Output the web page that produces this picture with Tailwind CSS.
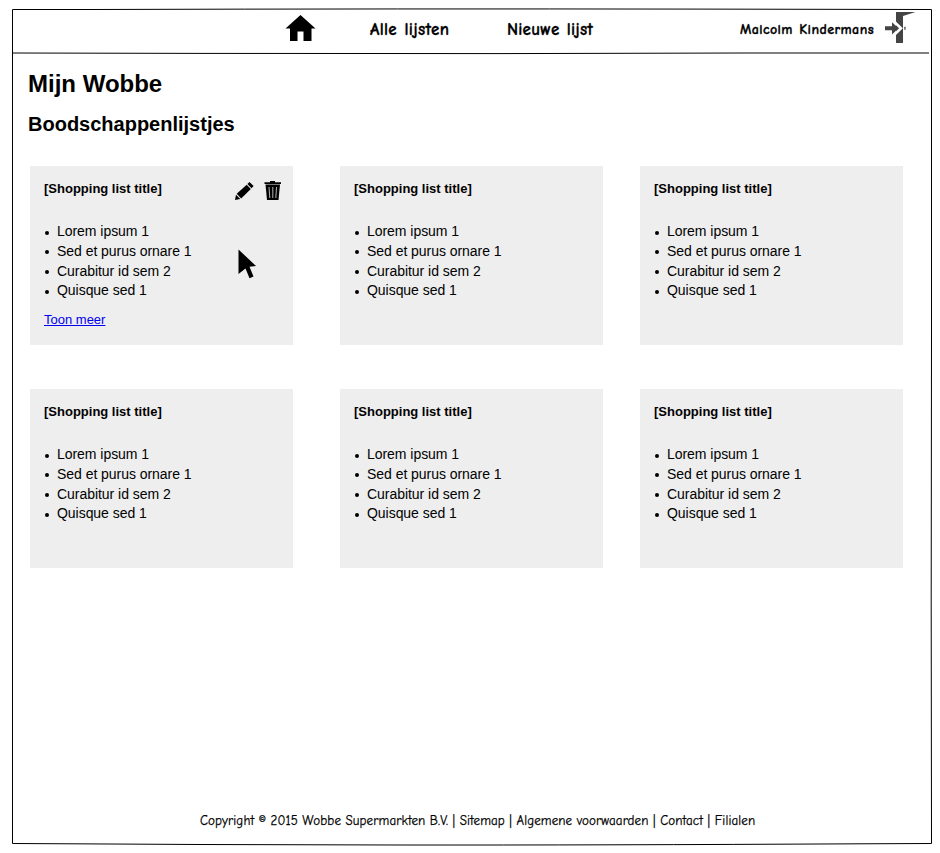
<!DOCTYPE html>
<html lang="nl">
<head>
<meta charset="utf-8">
<title>Mijn Wobbe</title>
<script src="https://cdn.jsdelivr.net/npm/@tailwindcss/browser@4"></script>
</head>
<body class="bg-white text-black font-['Liberation_Sans',Arial,sans-serif]">
<div class="relative w-[940px] h-[853px] overflow-hidden flex flex-col pt-[9px] px-[12px]">
  <!-- hand-drawn page frame -->
  <svg class="absolute inset-0 pointer-events-none" width="940" height="853" fill="none" stroke="#000" stroke-width="1">
    <path d="M12.5 9.5L90 9.5Q400 8.6 700 9.1L931.5 9.5L931.5 330L931.2 600L931.5 843.5L860 843.8Q600 845.2 400 845L200 844.5L110 844L12.5 843.5L12.5 9.5"/>
    <path d="M12.5 53L200 53.4L500 53.6L740 53L929 53"/>
  </svg>

  <header class="h-[44px] shrink-0 flex items-start font-['Comic_Sans_MS','Comic_Neue',Lato,sans-serif] font-bold text-[17px] leading-[22px] whitespace-nowrap">
    <svg class="ml-[273px] mt-[5px] shrink-0" width="31" height="28" viewBox="0 0 31 28"><path d="M15.5 1L30.5 14.5H26.5V27H18.5V17.5H12.5V27H5V14.5H.5Z"/></svg>
    <nav class="flex pt-[10px] [-webkit-text-stroke:0.3px_#000]">
      <a class="block ml-[54px] w-[137px] tracking-[0.32px] [word-spacing:1px]">Alle lijsten</a>
      <a class="block w-[233px] tracking-[0.2px] [word-spacing:1px]">Nieuwe lijst</a>
    </nav>
    <span class="block w-[144px] pt-[10px] text-[14px] tracking-[0.42px] [word-spacing:1px] [-webkit-text-stroke:0.3px_#000]">Malcolm Kindermans</span>
    <svg class="mt-[2px] shrink-0" width="33" height="33" viewBox="0 0 33 33">
      <path fill="#444" d="M12 1H31.5L19 5V32H12Z"/>
      <path d="M10.8 11.3L17 17.3L10.8 23.3" fill="none" stroke="#fff" stroke-width="2.6"/>
      <path fill="#444" d="M1 15.3H8V11.2L14.5 17.3L8 23.4V19.2H1Z"/>
      <path fill="#444" d="M20.3 15.7H21.6V18.7H20.3Z"/>
    </svg>
  </header>

  <main class="pl-[16px] pt-[17px]">
    <h1 class="font-bold text-[24px] leading-[28px]">Mijn Wobbe</h1>
    <h2 class="font-bold text-[20px] leading-[24px] mt-[14px]">Boodschappenlijstjes</h2>
    <div id="lists" class="ml-[2px] mt-[30px] grid grid-cols-[310px_300px_263px] gap-y-[44px]">
      <section class="relative w-[263px] h-[179px] bg-[#eeeeee] px-[14px] pt-[14px]">
        <h3 class="font-bold text-[13px] leading-[18px]">[Shopping list title]</h3>
        <ul class="mt-[24px] text-[14px] leading-[19.75px] tracking-[-0.04px]">
          <li class="flex items-center"><i class="w-[4px] h-[4px] mt-[1.5px] ml-[1px] mr-[8px] rounded-full bg-black"></i>Lorem ipsum 1</li>
          <li class="flex items-center"><i class="w-[4px] h-[4px] mt-[1.5px] ml-[1px] mr-[8px] rounded-full bg-black"></i>Sed et purus ornare 1</li>
          <li class="flex items-center"><i class="w-[4px] h-[4px] mt-[1.5px] ml-[1px] mr-[8px] rounded-full bg-black"></i>Curabitur id sem 2</li>
          <li class="flex items-center"><i class="w-[4px] h-[4px] mt-[1.5px] ml-[1px] mr-[8px] rounded-full bg-black"></i>Quisque sed 1</li>
        </ul>
      </section>
    </div>
  </main>

  <footer class="absolute left-[200px] top-[812px] whitespace-nowrap font-['Comic_Sans_MS','Comic_Neue',Lato,sans-serif] text-[13px] leading-[18px] tracking-[0.125px] [-webkit-text-stroke:0.25px_#000]">Copyright © 2015 Wobbe Supermarkten B.V. | Sitemap | Algemene voorwaarden | Contact | Filialen</footer>
</div>

<template id="actions">
  <a class="block absolute left-[14px] top-[145px] text-[13px] leading-[18px] text-[#0000ee] underline">Toon meer</a>
  <svg class="absolute left-[204px] top-[15px]" width="21" height="20" viewBox="0 0 21 20">
    <path d="M1 19L2 13.8L6.3 18Z"/><path d="M2.7 12.8L12.7 3.8L16.8 8L7.2 17.5Z"/><path d="M13.4 3.1L15.5 1L19.6 5.1L17.5 7.3Z"/>
  </svg>
  <svg class="absolute left-[234px] top-[15px]" width="18" height="20" viewBox="0 0 18 20">
    <path d="M.5 1.3H6V0H11V1.3H17V3H.5Z"/><path d="M1.5 3.6H16L14.5 19H3Z"/>
    <path d="M5 6L5.8 17M8.8 6V17M12.5 6L11.8 17" stroke="#c8c8c8" stroke-width=".9"/>
  </svg>
  <svg class="absolute left-[208px] top-[83px]" width="19" height="31" viewBox="0 0 19 31">
    <path d="M.5 .5L18 17L11.5 17.7L15.5 27.5L11.5 29.3L7.5 19.5L.5 25Z"/>
  </svg>
</template>
<script>
  const grid = document.getElementById('lists');
  const first = grid.firstElementChild;
  for (let i = 0; i < 5; i++) grid.appendChild(first.cloneNode(true));
  first.appendChild(document.getElementById('actions').content.cloneNode(true));
</script>
</body>
</html>
